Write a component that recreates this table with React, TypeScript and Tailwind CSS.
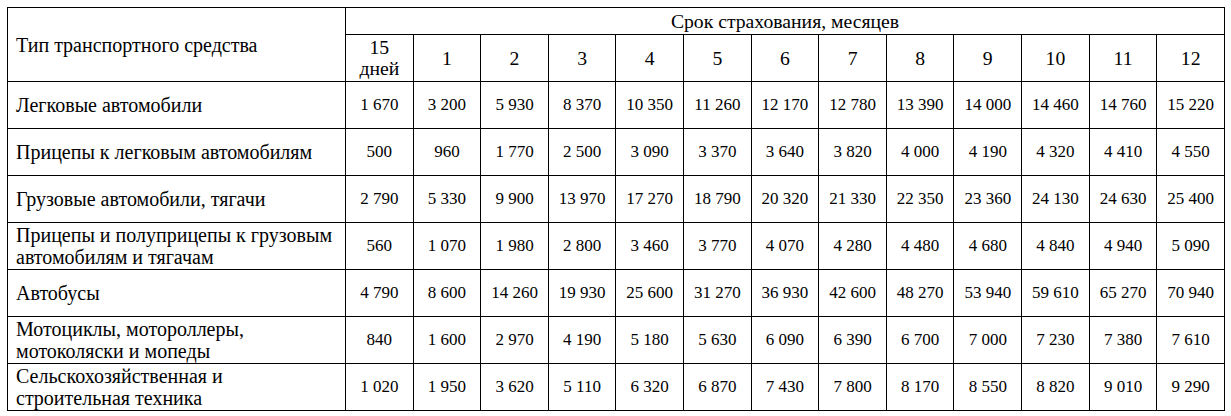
import React from 'react';

const months = ['1', '2', '3', '4', '5', '6', '7', '8', '9', '10', '11', '12'];

const rows: { label: string[]; values: string[] }[] = [
  { label: ['Легковые автомобили'], values: ['1 670', '3 200', '5 930', '8 370', '10 350', '11 260', '12 170', '12 780', '13 390', '14 000', '14 460', '14 760', '15 220'] },
  { label: ['Прицепы к легковым автомобилям'], values: ['500', '960', '1 770', '2 500', '3 090', '3 370', '3 640', '3 820', '4 000', '4 190', '4 320', '4 410', '4 550'] },
  { label: ['Грузовые автомобили, тягачи'], values: ['2 790', '5 330', '9 900', '13 970', '17 270', '18 790', '20 320', '21 330', '22 350', '23 360', '24 130', '24 630', '25 400'] },
  { label: ['Прицепы и полуприцепы к грузовым', 'автомобилям и тягачам'], values: ['560', '1 070', '1 980', '2 800', '3 460', '3 770', '4 070', '4 280', '4 480', '4 680', '4 840', '4 940', '5 090'] },
  { label: ['Автобусы'], values: ['4 790', '8 600', '14 260', '19 930', '25 600', '31 270', '36 930', '42 600', '48 270', '53 940', '59 610', '65 270', '70 940'] },
  { label: ['Мотоциклы, мотороллеры,', 'мотоколяски и мопеды'], values: ['840', '1 600', '2 970', '4 190', '5 180', '5 630', '6 090', '6 390', '6 700', '7 000', '7 230', '7 380', '7 610'] },
  { label: ['Сельскохозяйственная и', 'строительная техника'], values: ['1 020', '1 950', '3 620', '5 110', '6 320', '6 870', '7 430', '7 800', '8 170', '8 550', '8 820', '9 010', '9 290'] },
];

const cell = 'border border-black p-0 text-center align-middle';

export default function App() {
  return (
    <div className="bg-white w-[1231px] h-[416px] pt-[7px] pl-[7px] [font-family:'Liberation_Serif',serif] text-black">
      <table className="table-fixed border-collapse w-[1218px]">
        <colgroup>
          <col className="w-[338px]" />
          {Array.from({ length: 13 }).map((_, i) => (
            <col key={i} />
          ))}
        </colgroup>
        <thead>
          <tr className="h-[27px]">
            <th rowSpan={2} className="border border-black px-2 text-left align-middle font-normal text-[20px] leading-[22px]">
              Тип транспортного средства
            </th>
            <th colSpan={13} className={`${cell} font-normal text-[19.7px] leading-[22px]`}>
              Срок страхования, месяцев
            </th>
          </tr>
          <tr className="h-[47px]">
            <th className={`${cell} font-normal text-[19.7px] leading-[21px]`}>
              15
              <br />
              дней
            </th>
            {months.map((m) => (
              <th key={m} className={`${cell} font-normal text-[19.7px] leading-[22px]`}>
                {m}
              </th>
            ))}
          </tr>
        </thead>
        <tbody>
          {rows.map((row, i) => (
            <tr key={i} className="h-[47px]">
              <td className="border border-black px-2 text-left align-middle text-[20px] leading-[22.5px]">
                {row.label.map((line, j) => (
                  <div key={j}>{line}</div>
                ))}
              </td>
              {row.values.map((v, j) => (
                <td key={j} className={`${cell} text-[17px] leading-[20px]`}>
                  {v}
                </td>
              ))}
            </tr>
          ))}
        </tbody>
      </table>
    </div>
  );
}
